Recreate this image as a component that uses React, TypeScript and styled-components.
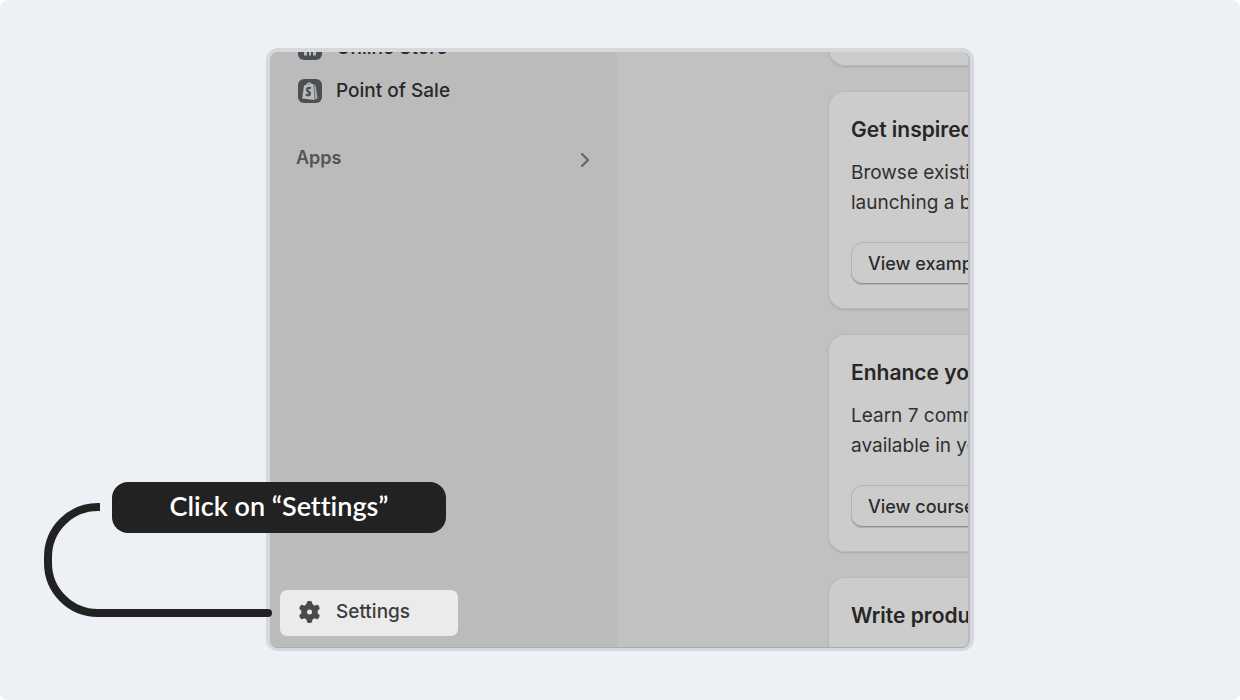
import React from "react";
import styled, { createGlobalStyle } from "styled-components";

const GlobalStyle = createGlobalStyle`
  *, *::before, *::after { box-sizing: border-box; }
  body { margin: 0; background: #ffffff; font-family: Inter, "Liberation Sans", sans-serif; }
  h2, h3, p, ul { margin: 0; padding: 0; }
  ul { list-style: none; }
`;

const Page = styled.main`
  min-height: 100vh;
  padding: 48px 24px 49px;
  background: #edf1f6;
  border-radius: 8px;
  overflow: hidden;
`;

const Figure = styled.div`
  position: relative;
  max-width: 708px;
  height: calc(100vh - 97px);
  min-height: 420px;
  margin: 0 auto;
`;

const Frame = styled.div`
  height: 100%;
  padding: 4px 4px 3px;
  background: #d5d9de;
  border-radius: 12px;
`;

const Screen = styled.div`
  display: flex;
  height: 100%;
  border-right: 2px solid #b8bcc0;
  border-bottom: 1px solid #a9acaf;
  border-radius: 8px;
  background: #c1c1c1;
  overflow: hidden;
`;

const Sidebar = styled.nav`
  display: flex;
  flex: 0 0 347px;
  flex-direction: column;
  padding: 0 10px 11px;
  background: #bbbbbb;
`;

const ChannelList = styled.ul`
  margin-top: -26px;
`;

const NavLink = styled.a`
  display: flex;
  align-items: center;
  gap: 14px;
  height: 43px;
  padding: 0 18px;
  color: #282828;
  font-size: 19px;
  font-weight: 500;
  line-height: 30px;
  text-decoration: none;
`;

const SettingsLink = styled(NavLink)`
  width: 178px;
  height: 46px;
  margin-top: auto;
  padding-bottom: 2px;
  border-radius: 7px;
  background: #ebebeb;
  color: #3c3c3c;
`;

const AppsButton = styled.button`
  display: flex;
  align-items: center;
  justify-content: space-between;
  height: 43px;
  margin-top: 24px;
  padding: 0 16px;
  border: 0;
  background: none;
  color: #555555;
  font-family: inherit;
  font-size: 18px;
  font-weight: 600;
  line-height: 28px;
`;

const Content = styled.section`
  display: flex;
  flex: 1;
  flex-direction: column;
  gap: 25px;
  min-width: 0;
  padding-left: 211px;
`;

const Card = styled.article`
  flex: none;
  width: 420px;
  min-height: 60px;
  padding: 24px 23px;
  border-radius: 17px;
  background: #cccccc;
  box-shadow: inset 0 0 0 1px #b9b9b9, 0 1px 2px #a6a6a6;

  &:first-child { margin-top: -46px; }
`;

const CardTitle = styled.h3`
  color: #262626;
  font-size: 21px;
  font-weight: 600;
  line-height: 30px;
`;

const CardText = styled.p`
  margin-top: 13px;
  color: #303030;
  font-size: 19px;
  line-height: 30px;
`;

const CardButton = styled.button`
  height: 43px;
  margin-top: 24px;
  padding: 0 17px;
  border: 0;
  border-radius: 12px;
  background: #cccccc;
  box-shadow: inset 0 0 0 1px #b3b3b3, inset 0 -2px 0 #929292;
  color: #2c2c2c;
  font-family: inherit;
  font-size: 18px;
  font-weight: 500;
  line-height: 28px;
`;

const Callout = styled.p`
  position: absolute;
  bottom: 118px;
  left: -154px;
  width: 334px;
  height: 51px;
  border-radius: 16px;
  background: #222222;
  color: #ffffff;
  font-family: Lato, "Liberation Sans", sans-serif;
  font-size: 27px;
  font-weight: 600;
  font-variant-ligatures: none;
  line-height: 48px;
  text-align: center;
`;

const Connector = styled.svg`
  position: absolute;
  bottom: 34px;
  left: -222px;
`;

const StoreIcon = () => (
  <svg width="24" height="24" viewBox="0 0 24 24" aria-hidden="true">
    <rect width="24" height="24" rx="6" fill="#4c4f51" />
    <path d="M6 5h12v14.500H6z" fill="#bbbbbb" />
    <path d="M9 14h2v6H9zM13 14h2v6h-2z" fill="#4c4f51" />
  </svg>
);

const PosIcon = () => (
  <svg width="24" height="24" viewBox="0 0 24 24" aria-hidden="true">
    <rect width="24" height="24" rx="6" fill="#4c4f51" />
    <path d="M6 6.600l2.400-.8C9 3.800 10.400 3 11.500 3.200c1 .1 1.700.8 2 1.700l2 .2 1 15.900L4.200 19.600z" fill="#bbbbbb" />
    <path d="M16.200 5.300l1.500 1.500 1.900 12.400-2.800 1.500z" fill="#a5a6a7" />
    <path d="M9.800 5.500c.3-.8.800-1.100 1.300-1.100.4 0 .7.300.9.800z" fill="#4c4f51" />
    <path d="M13 9.300c-2.200-.9-4-.2-4 1.400 0 2.100 3 1.900 3 3.900 0 1.800-2.200 2.200-4.100.8" fill="none" stroke="#4c4f51" strokeWidth="2.300" />
  </svg>
);

const GEAR_ANGLES = [0, 60, 120, 180, 240, 300];

const GearIcon = () => (
  <svg width="24" height="24" viewBox="0 0 24 24" aria-hidden="true">
    <g fill="#4a4a4a">
      <circle cx="11.500" cy="12" r="8.300" />
      {GEAR_ANGLES.map((angle) => (
        <rect key={angle} x="8.700" y="1" width="5.600" height="8" rx="2.200" transform={`rotate(${angle} 11.500 12)`} />
      ))}
    </g>
    <circle cx="11.500" cy="12" r="2.500" fill="#ebebeb" />
  </svg>
);

const Chevron = () => (
  <svg width="11" height="18" viewBox="0 0 11 18" fill="none" aria-hidden="true">
    <path d="M2 5l6 6-6 6" stroke="#666666" strokeWidth="2.200" strokeLinecap="round" strokeLinejoin="round" />
  </svg>
);

const guides = [
  {
    title: "Get inspired",
    lines: ["Browse existing", "launching a brand"],
    action: "View examples",
  },
  {
    title: "Enhance your",
    lines: ["Learn 7 common", "available in your"],
    action: "View courses",
  },
];

export default function App() {
  return (
    <>
      <GlobalStyle />
      <Page>
        <Figure>
          <Frame>
            <Screen>
              <Sidebar>
                <ChannelList>
                  <li><NavLink href="#store"><StoreIcon />Online Store</NavLink></li>
                  <li><NavLink href="#pos"><PosIcon />Point of Sale</NavLink></li>
                </ChannelList>
                <AppsButton type="button">Apps<Chevron /></AppsButton>
                <SettingsLink href="#settings"><GearIcon />Settings</SettingsLink>
              </Sidebar>
              <Content>
                <Card />
                {guides.map((guide) => (
                  <Card key={guide.title}>
                    <CardTitle>{guide.title}</CardTitle>
                    <CardText>{guide.lines[0]}<br />{guide.lines[1]}</CardText>
                    <CardButton type="button">{guide.action}</CardButton>
                  </Card>
                ))}
                <Card>
                  <CardTitle>Write product</CardTitle>
                  <CardText>&nbsp;</CardText>
                </Card>
              </Content>
            </Screen>
          </Frame>
          <Connector width="228" height="114" viewBox="0 0 228 114" fill="none" aria-hidden="true">
            <path d="M56 4H54A50 50 0 0 0 4 54V60A50 50 0 0 0 54 110H224" stroke="#222222" strokeWidth="8" />
            <circle cx="224" cy="110" r="4" fill="#222222" />
          </Connector>
          <Callout>Click on “Settings”</Callout>
        </Figure>
      </Page>
    </>
  );
}
